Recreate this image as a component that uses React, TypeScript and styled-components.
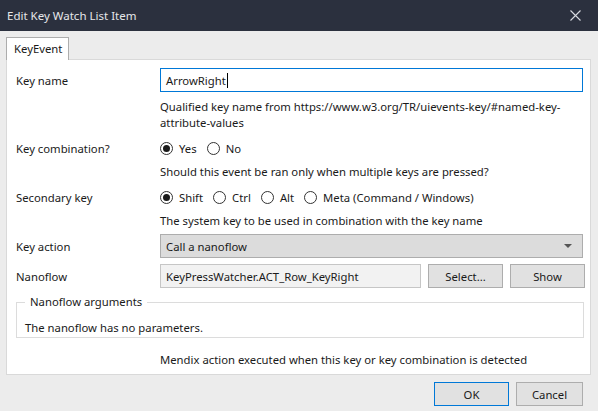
import React from "react";
import styled, { createGlobalStyle } from "styled-components";

const Global = createGlobalStyle`
  html, body { margin: 0; padding: 0; }
  body {
    width: 598px; height: 411px; overflow: hidden;
    background: #ececec;
    font-family: "Noto Sans", "Open Sans", sans-serif;
    font-size: 11.3px; color: #1a1a1a;
  }
  * { box-sizing: border-box; }
`;

const Window = styled.div`
  width: 598px; height: 411px;
  display: flex; flex-direction: column;
  background: #ececec;
`;

const TitleBar = styled.div`
  height: 31px; flex: none;
  background: #2b303e;
  color: #e6e7ea;
  display: flex; align-items: center; justify-content: space-between;
  padding: 0 17px 0 7px;
  font-size: 11.5px;
`;

const CloseIcon = () => (
  <svg width="11" height="11" viewBox="0 0 11 11">
    <path d="M0.5 0.5 L10.5 10.5 M10.5 0.5 L0.5 10.5" stroke="#d8dae0" strokeWidth="1.1" fill="none" />
  </svg>
);

const Body = styled.div`
  flex: 1; display: flex; flex-direction: column;
  padding: 6px 7px 0 6px;
`;

const TabStrip = styled.div`
  display: flex; height: 22px; position: relative; z-index: 1;
`;

const Tab = styled.div`
  width: 63px; height: 23px;
  background: #fff;
  border: 1px solid #adadad; border-bottom: none;
  padding: 3px 0 0 7px;
`;

const TabPage = styled.div`
  background: #fff;
  border: 1px solid #d9d9d9;
  height: 316px;
  padding: 8px 7px 0 9px;
  display: flex; flex-direction: column;
`;

const Row = styled.div<{ $mt?: number; $h?: number }>`
  display: grid; grid-template-columns: 144px 1fr;
  align-items: center;
  margin-top: ${(p) => p.$mt ?? 0}px;
  height: ${(p) => p.$h ?? 24}px;
`;

const Label = styled.div``;

const Help = styled.div<{ $mt: number }>`
  margin-left: 144px; margin-top: ${(p) => p.$mt}px;
  line-height: 16px; white-space: nowrap;
`;

const TextInput = styled.div<{ $focused?: boolean; $w?: number }>`
  height: 24px;
  ${(p) => (p.$w ? `width: ${p.$w}px; flex: none;` : "")}
  border: 1px solid ${(p) => (p.$focused ? "#0078d7" : "#c6c6c6")};
  background: ${(p) => (p.$focused ? "#fff" : "#f2f2f2")};
  display: flex; align-items: center; padding-left: 5px;
`;

const Caret = styled.span`
  display: inline-block; width: 1px; height: 15px; background: #000; margin-left: 1px;
`;

const Radios = styled.div`
  display: flex; align-items: center; gap: 10px;
`;

const RadioItem = styled.label`
  display: flex; align-items: center; gap: 6px;
`;

const RadioCircle = styled.span<{ $checked?: boolean }>`
  width: 13px; height: 13px; border-radius: 50%;
  border: 1px solid #333; background: #fff;
  display: flex; align-items: center; justify-content: center;
  &::after {
    content: ""; width: 7px; height: 7px; border-radius: 50%;
    background: ${(p) => (p.$checked ? "#1a1a1a" : "transparent")};
  }
`;

const Radio = ({ label, checked }: { label: string; checked?: boolean }) => (
  <RadioItem>
    <RadioCircle $checked={checked} />
    <span>{label}</span>
  </RadioItem>
);

const Combo = styled.div`
  height: 24px; background: #dcdcdc; border: 1px solid #adadad;
  display: flex; align-items: center; justify-content: space-between;
  padding: 0 10px 0 5px;
`;

const Arrow = styled.span`
  width: 0; height: 0;
  border-left: 4px solid transparent; border-right: 4px solid transparent;
  border-top: 4px solid #555;
`;

const Controls = styled.div`
  display: flex; gap: 7px;
`;

const Button = styled.div<{ $w: number; $default?: boolean }>`
  width: ${(p) => p.$w}px; height: 24px; flex: none;
  background: #e1e1e1;
  border: 1px solid ${(p) => (p.$default ? "#0078d7" : "#adadad")};
  display: flex; align-items: center; justify-content: center;
`;

const Group = styled.fieldset`
  margin: 7px 0 0 0; padding: 0 0 1px 8px;
  border: 1px solid #dcdcdc;
  width: 568px;
`;

const Legend = styled.legend`
  margin-left: 0; padding: 0 5px; line-height: 14px;
`;

const GroupText = styled.div`
  line-height: 16px; margin-top: 11px;
`;

const Footer = styled.div`
  display: flex; justify-content: flex-end; gap: 7px;
  padding: 7px 8px 0 0;
`;

export default function App() {
  return (
    <>
      <Global />
      <Window>
        <TitleBar>
          <span>Edit Key Watch List Item</span>
          <CloseIcon />
        </TitleBar>
        <Body>
          <TabStrip>
            <Tab>KeyEvent</Tab>
          </TabStrip>
          <TabPage>
            <Row>
              <Label>Key name</Label>
              <TextInput $focused>
                ArrowRight<Caret />
              </TextInput>
            </Row>
            <Help $mt={7}>
              <div>Qualified key name from https://www.w3.org/TR/uievents-key/#named-key-</div>
              <div>attribute-values</div>
            </Help>
            <Row $mt={7} $h={20}>
              <Label>Key combination?</Label>
              <Radios>
                <Radio label="Yes" checked />
                <Radio label="No" />
              </Radios>
            </Row>
            <Help $mt={6}>Should this event be ran only when multiple keys are pressed?</Help>
            <Row $mt={7} $h={20}>
              <Label>Secondary key</Label>
              <Radios>
                <Radio label="Shift" checked />
                <Radio label="Ctrl" />
                <Radio label="Alt" />
                <Radio label="Meta (Command / Windows)" />
              </Radios>
            </Row>
            <Help $mt={6}>The system key to be used in combination with the key name</Help>
            <Row $mt={5}>
              <Label>Key action</Label>
              <Combo>
                <span>Call a nanoflow</span>
                <Arrow />
              </Combo>
            </Row>
            <Row $mt={6}>
              <Label>Nanoflow</Label>
              <Controls>
                <TextInput $w={261}>KeyPressWatcher.ACT_Row_KeyRight</TextInput>
                <Button $w={75}>Select...</Button>
                <Button $w={75}>Show</Button>
              </Controls>
            </Row>
            <Group>
              <Legend>Nanoflow arguments</Legend>
              <GroupText>The nanoflow has no parameters.</GroupText>
            </Group>
            <Help $mt={14}>Mendix action executed when this key or key combination is detected</Help>
          </TabPage>
          <Footer>
            <Button $w={75} $default>OK</Button>
            <Button $w={67}>Cancel</Button>
          </Footer>
        </Body>
      </Window>
    </>
  );
}
